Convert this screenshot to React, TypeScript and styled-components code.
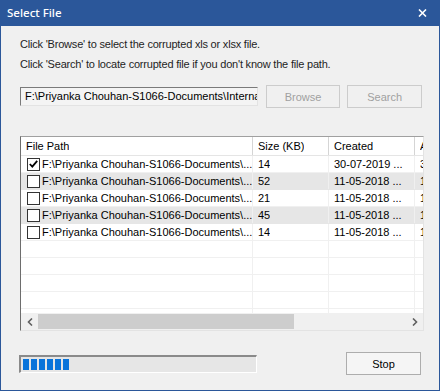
import React from "react";
import styled, { createGlobalStyle } from "styled-components";

const Global = createGlobalStyle`
  html, body { margin: 0; padding: 0; background: #f0f0f0; }
  * { box-sizing: border-box; }
`;

const Window = styled.div`
  width: 440px;
  height: 391px;
  border: 1px solid #2b579a;
  border-top: none;
  background: #f0f0f0;
  display: flex;
  flex-direction: column;
  font-family: "Liberation Sans", Arial, sans-serif;
  overflow: hidden;
`;

const TitleBar = styled.div`
  height: 26px;
  flex: none;
  background: #2b579a;
  display: flex;
  align-items: center;
  justify-content: space-between;
  padding: 0 13px 1px 7px;
  margin: 0 -1px;
`;

const Title = styled.div`
  color: #ffffff;
  font-family: "Noto Sans", "Open Sans", sans-serif;
  font-size: 11.5px;
  font-weight: 500;
`;

const CloseIcon = styled.svg`
  width: 9px;
  height: 8px;
  display: block;
`;

const Body = styled.div`
  flex: 1;
  display: flex;
  flex-direction: column;
  padding: 8px 17px 0 19px;
`;

const Hint = styled.div`
  font-size: 11px;
  letter-spacing: -0.2px;
  line-height: 20px;
  color: #1e1e1e;
`;

const PathRow = styled.div`
  display: flex;
  align-items: center;
  margin-top: 11px;
  height: 23px;
`;

const PathInput = styled.div`
  width: 239px;
  height: 19px;
  border-top: 1px solid #7a7a7a;
  border-left: 1px solid #7a7a7a;
  border-right: 1px solid #e3e3e3;
  border-bottom: 1px solid #e3e3e3;
  background: #f4f4f4;
  font-family: "Liberation Sans", Tahoma, sans-serif;
  font-size: 11px;
  line-height: 17px;
  padding-left: 4px;
  white-space: nowrap;
  overflow: hidden;
  color: #000;
`;

const Button = styled.div<{ $disabled?: boolean }>`
  width: 75px;
  height: 23px;
  border: 1px solid ${(p) => (p.$disabled ? "#cccccc" : "#adadad")};
  background: ${(p) => (p.$disabled ? "#f0f0f0" : "#f5f5f5")};
  color: ${(p) => (p.$disabled ? "#a0a0a0" : "#000000")};
  font-size: 11px;
  display: flex;
  align-items: center;
  justify-content: center;
  margin-left: ${(p) => (p.$disabled ? "7px" : "0")};
`;

const ListBox = styled.div`
  margin-top: 28px;
  width: 404px;
  height: 195px;
  border-top: 1px solid #a0a0a0;
  border-left: 1px solid #6d6d6d;
  border-right: 1px solid #e3e3e3;
  border-bottom: 1px solid #e3e3e3;
  background: #ffffff;
  display: flex;
  flex-direction: column;
  overflow: hidden;
`;

const Rows = styled.div`
  flex: 1;
  overflow: hidden;
`;

const Row = styled.div<{ $striped?: boolean; $header?: boolean }>`
  display: flex;
  height: ${(p) => (p.$header ? "19px" : "17px")};
  background: ${(p) => (p.$striped ? "#e6e6e6" : "#ffffff")};
  border-bottom: 1px solid ${(p) => (p.$header ? "#e5e5e5" : p.$striped ? "#e6e6e6" : "#f0f0f0")};
  font-family: "Liberation Sans", Tahoma, sans-serif;
  font-size: 11px;
  color: #000;
  white-space: nowrap;
`;

const Cell = styled.div<{ $w: number; $header?: boolean; $pad?: number }>`
  flex: none;
  width: ${(p) => p.$w}px;
  display: flex;
  align-items: center;
  padding-left: ${(p) => (p.$pad ?? 5)}px;
  overflow: hidden;
  border-right: 1px solid ${(p) => (p.$header ? "#d5d5d5" : "#f0f0f0")};
  &:last-child { border-right: none; }
`;

const CellText = styled.span`
  overflow: hidden;
  min-width: 0;
`;

const Check = styled.div`
  flex: none;
  width: 13px;
  height: 13px;
  border: 1px solid #333333;
  background: #ffffff;
  margin-right: 2px;
  display: flex;
  align-items: center;
  justify-content: center;
`;

const HScroll = styled.div`
  flex: none;
  height: 17px;
  background: #f0f0f0;
  display: flex;
  align-items: center;
`;

const Arrow = styled.div`
  flex: none;
  width: 17px;
  height: 17px;
  display: flex;
  align-items: center;
  justify-content: center;
`;

const Track = styled.div`
  flex: 1;
  height: 15px;
  display: flex;
`;

const Thumb = styled.div`
  background: #cdcdcd;
  height: 100%;
`;

const FooterRow = styled.div`
  margin-top: 21px;
  margin-left: -1px;
  display: flex;
  align-items: center;
  justify-content: space-between;
  height: 23px;
  width: 404px;
`;

const Progress = styled.div`
  width: 238px;
  height: 18px;
  border-top: 2px solid #8a8a8a;
  border-left: 2px solid #8a8a8a;
  border-right: 1px solid #ffffff;
  border-bottom: 1px solid #ffffff;
  background: #e6e6e6;
  display: flex;
  align-items: center;
  gap: 2px;
  padding-left: 2px;
`;

const Block = styled.div`
  width: 6px;
  height: 11px;
  background: #0a74da;
`;

const cols = [
  { title: "File Path", w: 232 },
  { title: "Size (KB)", w: 76 },
  { title: "Created", w: 86 },
  { title: "A", w: 40 },
];

const data = [
  { checked: true, size: "14", created: "30-07-2019 ...", last: "3" },
  { checked: false, size: "52", created: "11-05-2018 ...", last: "1" },
  { checked: false, size: "21", created: "11-05-2018 ...", last: "1" },
  { checked: false, size: "45", created: "11-05-2018 ...", last: "1" },
  { checked: false, size: "14", created: "11-05-2018 ...", last: "1" },
];

const PATH = "F:\\Priyanka Chouhan-S1066-Documents\\...";

export default function App() {
  return (
    <>
      <Global />
      <Window>
        <TitleBar>
          <Title>Select File</Title>
          <CloseIcon viewBox="0 0 9 8">
            <path d="M1 0.5 L8 7.5 M8 0.5 L1 7.5" stroke="#ffffff" strokeWidth="1.6" fill="none" />
          </CloseIcon>
        </TitleBar>
        <Body>
          <Hint>Click 'Browse' to select the corrupted xls or xlsx file.</Hint>
          <Hint>Click 'Search' to locate corrupted file if you don't know the file path.</Hint>
          <PathRow>
            <PathInput>F:\Priyanka Chouhan-S1066-Documents\Interna</PathInput>
            <Button $disabled style={{ marginLeft: 8 }}>Browse</Button>
            <Button $disabled>Search</Button>
          </PathRow>
          <ListBox>
            <Rows>
              <Row $header>
                {cols.map((c) => (
                  <Cell key={c.title} $w={c.w} $header>
                    <CellText>{c.title}</CellText>
                  </Cell>
                ))}
              </Row>
              {data.map((d, i) => (
                <Row key={i} $striped={i % 2 === 1}>
                  <Cell $w={cols[0].w} $pad={6}>
                    <Check>
                      {d.checked && (
                        <svg width="9" height="8" viewBox="0 0 9 8">
                          <path d="M0.8 4 L3.3 6.6 L8.2 0.9" stroke="#000" strokeWidth="1.8" fill="none" />
                        </svg>
                      )}
                    </Check>
                    <CellText>{PATH}</CellText>
                  </Cell>
                  <Cell $w={cols[1].w}><CellText>{d.size}</CellText></Cell>
                  <Cell $w={cols[2].w}><CellText>{d.created}</CellText></Cell>
                  <Cell $w={cols[3].w}><CellText>{d.last}</CellText></Cell>
                </Row>
              ))}
              {[0, 1, 2, 3, 4].map((i) => (
                <Row key={"e" + i}>
                  {cols.map((c) => (
                    <Cell key={c.title} $w={c.w} />
                  ))}
                </Row>
              ))}
            </Rows>
            <HScroll>
              <Arrow>
                <svg width="6" height="8" viewBox="0 0 6 8">
                  <path d="M5 0.5 L1.5 4 L5 7.5" stroke="#606060" strokeWidth="1.6" fill="none" />
                </svg>
              </Arrow>
              <Track>
                <Thumb style={{ width: 256 }} />
              </Track>
              <Arrow>
                <svg width="6" height="8" viewBox="0 0 6 8">
                  <path d="M1 0.5 L4.5 4 L1 7.5" stroke="#606060" strokeWidth="1.6" fill="none" />
                </svg>
              </Arrow>
            </HScroll>
          </ListBox>
          <FooterRow>
            <Progress>
              {[0, 1, 2, 3, 4, 5].map((i) => (
                <Block key={i} />
              ))}
            </Progress>
            <Button style={{ marginRight: 2 }}>Stop</Button>
          </FooterRow>
        </Body>
      </Window>
    </>
  );
}
